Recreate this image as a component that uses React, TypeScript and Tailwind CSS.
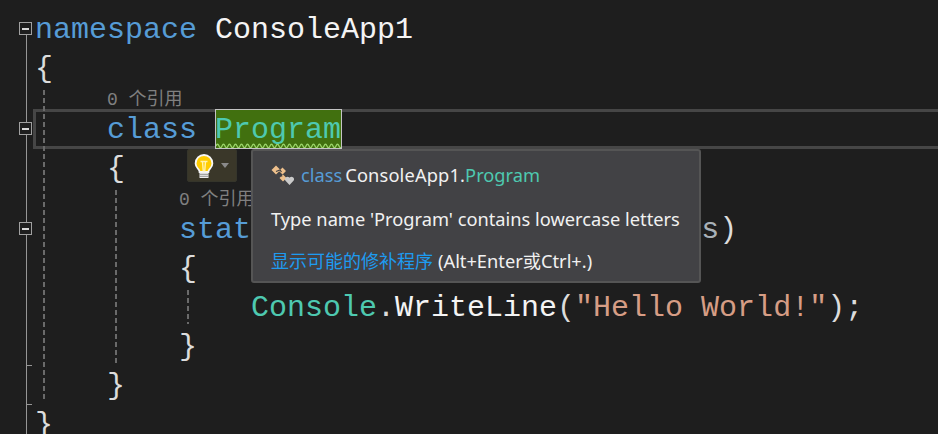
const mono = 'font-["Liberation_Mono",monospace]';

function Fold() {
  return (
    <div className="absolute left-[19px] flex h-[13px] w-[13px] items-center justify-center border-[1.5px] border-[#a0a0a0] bg-[#1e1e1e]">
      <div className="h-[2px] w-[7px] bg-[#d8d8d8]" />
    </div>
  );
}

function CodeLine({ indent, children }: { indent: number; children: React.ReactNode }) {
  return (
    <div className={`flex h-[39px] items-center whitespace-pre text-[30px] leading-[39px] ${mono}`} style={{ paddingLeft: indent * 18 }}>
      {children}
    </div>
  );
}

function Lens({ indent }: { indent: number }) {
  return (
    <div
      className={`flex h-[22px] items-center whitespace-pre text-[18px] leading-[22px] text-[#808080] font-["Liberation_Mono","Noto_Sans_CJK_SC",monospace]`}
      style={{ paddingLeft: indent * 18 }}
    >
      0 个引用
    </div>
  );
}

function Bulb() {
  return (
    <svg width="22" height="26" viewBox="0 0 22 26">
      <path d="M11 2a8.4 8.4 0 0 0-8.4 8.4c0 3.2 2 4.6 3.2 6.4.6.9.8 1.4.8 2.2h8.8c0-.8.2-1.3.8-2.2 1.2-1.8 3.2-3.2 3.2-6.4A8.4 8.4 0 0 0 11 2z" fill="#ffcc00" stroke="#f6f6f6" strokeWidth="1.8" />
      <path d="M7.5 8.5h7M9.5 8.5l.8 10M12.5 8.5l-.8 10" fill="none" stroke="#fff3b0" strokeWidth="1.4" />
      <rect x="6.5" y="19.5" width="9" height="5.5" fill="#ededed" />
      <path d="M6.5 21.3h9M6.5 23.3h9" stroke="#7a7a7a" strokeWidth="0.8" />
    </svg>
  );
}

function ClassIcon() {
  return (
    <svg width="23" height="20" viewBox="0 0 23 20">
      <path d="M5 .5L9.5 5 5 9.5.5 5zM11.5 2.5L15 6l-3.5 3.5L8 6zM12 9.5l3.5 3.5-3.5 3.5L8.5 13z" fill="#eec08c" />
      <path d="M5 6.5l4-1.5 1.5 2M9 8l2 3.5" stroke="#424245" strokeWidth="1.2" fill="none" />
      <path d="M18.5 20l-4-4.2a2.5 2.5 0 0 1 3.5-3.5l.5.5.5-.5a2.5 2.5 0 0 1 3.5 3.5z" fill="#cacaca" />
    </svg>
  );
}

export default function App() {
  const kw = 'text-[#569cd6]';
  const white = 'text-[#f4f4f4]';
  const punct = 'text-[#dcdcdc]';
  const type = 'text-[#4ec9b0]';
  const dash = 'absolute w-[2px] bg-[repeating-linear-gradient(to_bottom,#6a6a6a_0,#6a6a6a_5px,transparent_5px,transparent_8px)]';

  return (
    <div className="relative h-[434px] w-[938px] overflow-hidden bg-[#1e1e1e] pt-[11px]">
      {/* current line highlight */}
      <div className="absolute left-[33px] top-[109px] h-[40px] w-[905px] border-[3px] border-r-0 border-[#464646]" />
      <div className="absolute left-[215px] top-[109px] h-[40px] w-[127px] border border-[#c4c4c4] bg-[#41700f]">
        <svg className="absolute bottom-0 left-0" width="125" height="6" viewBox="0 0 125 6">
          <path d="M0 4 q1.5 -3.5 3 0 t3 0 t3 0 t3 0 t3 0 t3 0 t3 0 t3 0 t3 0 t3 0 t3 0 t3 0 t3 0 t3 0 t3 0 t3 0 t3 0 t3 0 t3 0 t3 0 t3 0 t3 0 t3 0 t3 0 t3 0 t3 0 t3 0 t3 0 t3 0 t3 0 t3 0 t3 0 t3 0 t3 0 t3 0 t3 0 t3 0 t3 0 t3 0 t3 0 t3 0 t3 0" fill="none" stroke="#9ad468" strokeWidth="1.3" />
        </svg>
      </div>

      {/* outlining margin */}
      <div className="absolute left-[26px] top-[34px] h-[400px] w-px bg-[#969696]" />
      <div className="absolute left-[26px] top-[365px] h-px w-[6px] bg-[#969696]" />
      <div className="absolute left-[26px] top-[404px] h-px w-[6px] bg-[#969696]" />
      <div className="absolute top-[22px] left-0"><Fold /></div>
      <div className="absolute top-[122px] left-0"><Fold /></div>
      <div className="absolute top-[222px] left-0"><Fold /></div>

      {/* indent guides */}
      <div className={`${dash} left-[43px] top-[90px] h-[310px]`} />
      <div className={`${dash} left-[115px] top-[190px] h-[175px]`} />
      <div className={`${dash} left-[187px] top-[290px] h-[34px]`} />

      <div className="relative pl-[35px]">
        <CodeLine indent={0}><span className={kw}>namespace</span><span className={white}> ConsoleApp1</span></CodeLine>
        <CodeLine indent={0}><span className={punct}>{'{'}</span></CodeLine>
        <Lens indent={4} />
        <CodeLine indent={4}><span className={kw}>class</span><span> </span><span className={type}>Program</span></CodeLine>
        <CodeLine indent={4}><span className={punct}>{'{'}</span></CodeLine>
        <Lens indent={8} />
        <CodeLine indent={8}><span className={kw}>static</span><span className={kw}> void</span><span className={white}> Main</span><span className={punct}>(</span><span className={kw}>string</span><span className={punct}>[] </span><span className="text-[#a9b1b8]">args</span><span className={punct}>)</span></CodeLine>
        <CodeLine indent={8}><span className={punct}>{'{'}</span></CodeLine>
        <CodeLine indent={12}><span className={type}>Console</span><span className={punct}>.</span><span className={white}>WriteLine</span><span className={punct}>(</span><span className="text-[#d69d85]">"Hello World!"</span><span className={punct}>);</span></CodeLine>
        <CodeLine indent={8}><span className={punct}>{'}'}</span></CodeLine>
        <CodeLine indent={4}><span className={punct}>{'}'}</span></CodeLine>
        <CodeLine indent={0}><span className={punct}>{'}'}</span></CodeLine>
      </div>

      {/* light bulb */}
      <div className="absolute left-[187px] top-[149px] flex h-[33px] w-[50px] items-center rounded-[2px] border border-[#35352b] bg-[#3a3729] pl-[5px]">
        <Bulb />
        <div className="ml-[6px] h-0 w-0 border-x-[4.5px] border-t-[5px] border-x-transparent border-t-[#8a8a8a]" />
      </div>

      {/* quick info */}
      <div className={`absolute left-[251px] top-[149px] h-[134px] w-[450px] rounded-[3px] border-2 border-[#555555] bg-[#424245] pl-[18px] text-[18.25px] text-[#f1f1f1] font-["Noto_Sans","Noto_Sans_CJK_SC",sans-serif]`}>
        <div className="flex h-[47px] items-center">
          <ClassIcon />
          <span className="ml-[7px] text-[#569cd6]">class</span>
          <span className="ml-[3px] tracking-[0.15px]">ConsoleApp1.</span>
          <span className="text-[#4ec9b0]">Program</span>
        </div>
        <div className="flex h-[41px] items-center">Type name 'Program' contains lowercase letters</div>
        <div className="mt-[4px] flex h-[36px] items-center">
          <span className="text-[18px] text-[#1e9bf0]">显示可能的修补程序</span>
          <span className="ml-[5px]">(Alt+Enter或Ctrl+.)</span>
        </div>
      </div>
    </div>
  );
}
